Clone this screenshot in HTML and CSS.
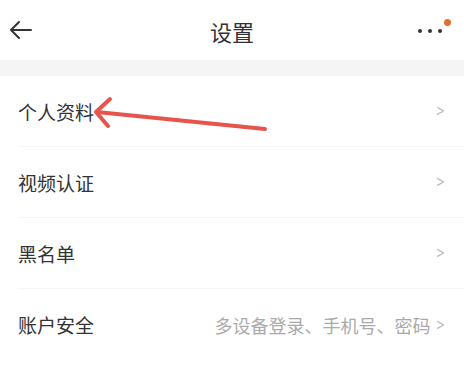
FILE: index.html
```html
<!DOCTYPE html>
<html lang="zh">
<head>
  <meta charset="UTF-8">
  <title>设置</title>
  <link rel="stylesheet" href="styles.css">
</head>
<body>
  <div class="page">
    <div class="topbar">
      <a href="javascript:;" class="back">
        <svg width="24" height="20" viewBox="0 0 24 20"><path d="M22 10H2M10 2L2 10L10 18" fill="none" stroke="#333" stroke-width="2" stroke-linecap="round" stroke-linejoin="round"/></svg>
      </a>
      <div class="title">设置</div>
      <a href="javascript:;" class="more">
        <i></i><i></i><i></i>
        <span class="badge"></span>
      </a>
    </div>
    <div class="gap"></div>
    <ul class="list">
      <li class="item">
        <span class="label">个人资料</span>
        <span class="chev">&gt;</span>
      </li>
      <li class="item">
        <span class="label">视频认证</span>
        <span class="chev">&gt;</span>
      </li>
      <li class="item">
        <span class="label">黑名单</span>
        <span class="chev">&gt;</span>
      </li>
      <li class="item">
        <span class="label">账户安全</span>
        <span class="desc">多设备登录、手机号、密码</span>
        <span class="chev">&gt;</span>
      </li>
    </ul>
    <!-- 标注箭头 -->
    <svg class="mark" width="464" height="370" viewBox="0 0 464 370">
      <g fill="none" stroke="#e8534c" stroke-width="4" stroke-linecap="round" stroke-linejoin="round">
        <path d="M265 129L97 112"/>
        <path d="M110 99L96 112L108 126"/>
      </g>
    </svg>
  </div>
</body>
</html>
```

FILE: styles.css
```css
* {
  margin: 0;
  padding: 0;
  box-sizing: border-box;
}
body {
  font-family: "Noto Sans CJK SC", "Noto Sans", sans-serif;
  background: #fff;
  color: #333;
}
.page {
  width: 464px;
  height: 370px;
  position: relative;
  overflow: hidden;
}
.topbar {
  height: 60px;
  display: flex;
  align-items: center;
  justify-content: space-between;
  padding: 0 12px 0 9px;
  position: relative;
}
.back {
  display: flex;
  width: 24px;
}
.title {
  position: absolute;
  left: 50%;
  transform: translateX(-50%);
  font-size: 22px;
  top: 16px;
  line-height: 30px;
}
.more {
  display: flex;
  gap: 6px;
  align-items: center;
  position: relative;
  padding-top: 2px;
  margin-right: 10px;
}
.more i {
  width: 4px;
  height: 4px;
  border-radius: 50%;
  background: #333;
}
.badge {
  position: absolute;
  right: -9px;
  top: -8px;
  width: 7px;
  height: 7px;
  border-radius: 50%;
  background: #e0722f;
}
.gap {
  height: 16px;
  background: #f5f5f5;
}
.list {
  list-style: none;
  padding-left: 18px;
}
.item {
  height: 71px;
  display: flex;
  align-items: center;
  padding-right: 17px;
  border-bottom: 1px solid #f6f6f6;
}
.item:last-child {
  border-bottom: none;
}
.label {
  font-size: 19px;
  color: #333;
  flex: 1;
}
.desc {
  font-size: 18px;
  color: #aaa;
  margin-right: 4px;
}
.chev {
  font-family: "DejaVu Sans", sans-serif;
  font-size: 15px;
  color: #bbb;
  transform: scaleX(0.7);
}
.mark {
  position: absolute;
  left: 0;
  top: 0;
}
```
